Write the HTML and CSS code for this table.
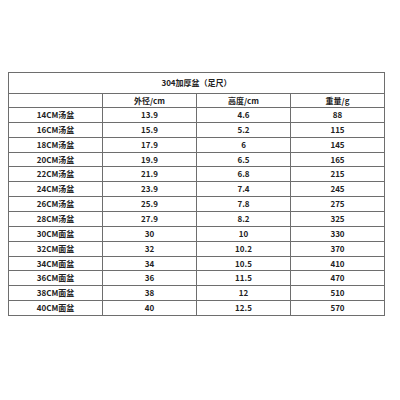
FILE: index.html
```html
<!DOCTYPE html>
<html>
<head>
<meta charset="utf-8">
<link rel="stylesheet" href="styles.css">
</head>
<body>
<table class="spec">
  <tr class="title"><td colspan="4">304加厚盆（足尺）</td></tr>
  <tr class="head"><td></td><td>外径/cm</td><td>高度/cm</td><td>重量/g</td></tr>
  <tr><td>14CM汤盆</td><td>13.9</td><td>4.6</td><td>88</td></tr>
  <tr><td>16CM汤盆</td><td>15.9</td><td>5.2</td><td>115</td></tr>
  <tr><td>18CM汤盆</td><td>17.9</td><td>6</td><td>145</td></tr>
  <tr><td>20CM汤盆</td><td>19.9</td><td>6.5</td><td>165</td></tr>
  <tr><td>22CM汤盆</td><td>21.9</td><td>6.8</td><td>215</td></tr>
  <tr><td>24CM汤盆</td><td>23.9</td><td>7.4</td><td>245</td></tr>
  <tr><td>26CM汤盆</td><td>25.9</td><td>7.8</td><td>275</td></tr>
  <tr><td>28CM汤盆</td><td>27.9</td><td>8.2</td><td>325</td></tr>
  <tr><td>30CM面盆</td><td>30</td><td>10</td><td>330</td></tr>
  <tr><td>32CM面盆</td><td>32</td><td>10.2</td><td>370</td></tr>
  <tr><td>34CM面盆</td><td>34</td><td>10.5</td><td>410</td></tr>
  <tr><td>36CM面盆</td><td>36</td><td>11.5</td><td>470</td></tr>
  <tr><td>38CM面盆</td><td>38</td><td>12</td><td>510</td></tr>
  <tr><td>40CM面盆</td><td>40</td><td>12.5</td><td>570</td></tr>
</table>
</body>
</html>
```
FILE: styles.css
```css
html, body {
  background: #ffffff;
}
body {
  margin: 0;
  padding: 72px 0 0 8px;
}
.spec {
  border-collapse: collapse;
  table-layout: fixed;
  width: 377px;
  font-family: "Noto Sans CJK SC", "Liberation Sans", sans-serif;
  font-weight: bold;
  font-size: 8px;
  color: #222;
}
.spec td {
  border: 1px solid #6e6e6e;
  width: 94px;
  height: 13.86px;
  padding: 0;
  text-align: center;
  line-height: 10px;
}
.spec .title td {
  height: 20px;
}
.spec .head td {
  height: 13px;
}
```
